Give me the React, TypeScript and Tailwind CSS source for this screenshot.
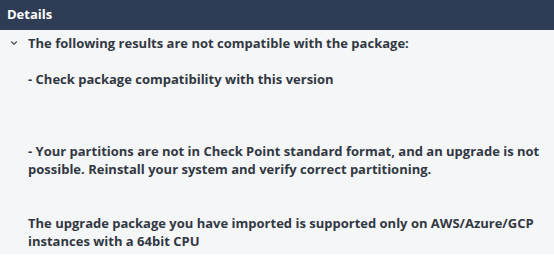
import React from "react";

export default function App() {
  return (
    <div className="w-[554px] h-[262px] bg-white" style={{ fontFamily: '"Open Sans", "Liberation Sans", sans-serif' }}>
      <div className="h-[30px] bg-[#2e3d55] flex items-center pl-[7px] text-white text-[13px] font-bold">
        Details
      </div>
      <div className="bg-[#f5f6f8] pt-[4px] pb-[4px] pr-[10px] flex">
        <div className="w-[28px] shrink-0 flex items-start">
          <svg width="8" height="6" viewBox="0 0 8 6" className="ml-[10px] mt-[6px]">
            <path d="M1.2 1.5 L4 4.2 L6.8 1.5" fill="none" stroke="#555b66" strokeWidth="1.4" />
          </svg>
        </div>
        <div className="flex-1 text-[13px] leading-[18px] font-bold text-[#323842] whitespace-pre-wrap">
          {"The following results are not compatible with the package:\n\n- Check package compatibility with this version\n\n\n\n- Your partitions are not in Check Point standard format, and an upgrade is not possible. Reinstall your system and verify correct partitioning.\n\n\nThe upgrade package you have imported is supported only on AWS/Azure/GCP instances with a 64bit CPU"}
        </div>
      </div>
    </div>
  );
}
